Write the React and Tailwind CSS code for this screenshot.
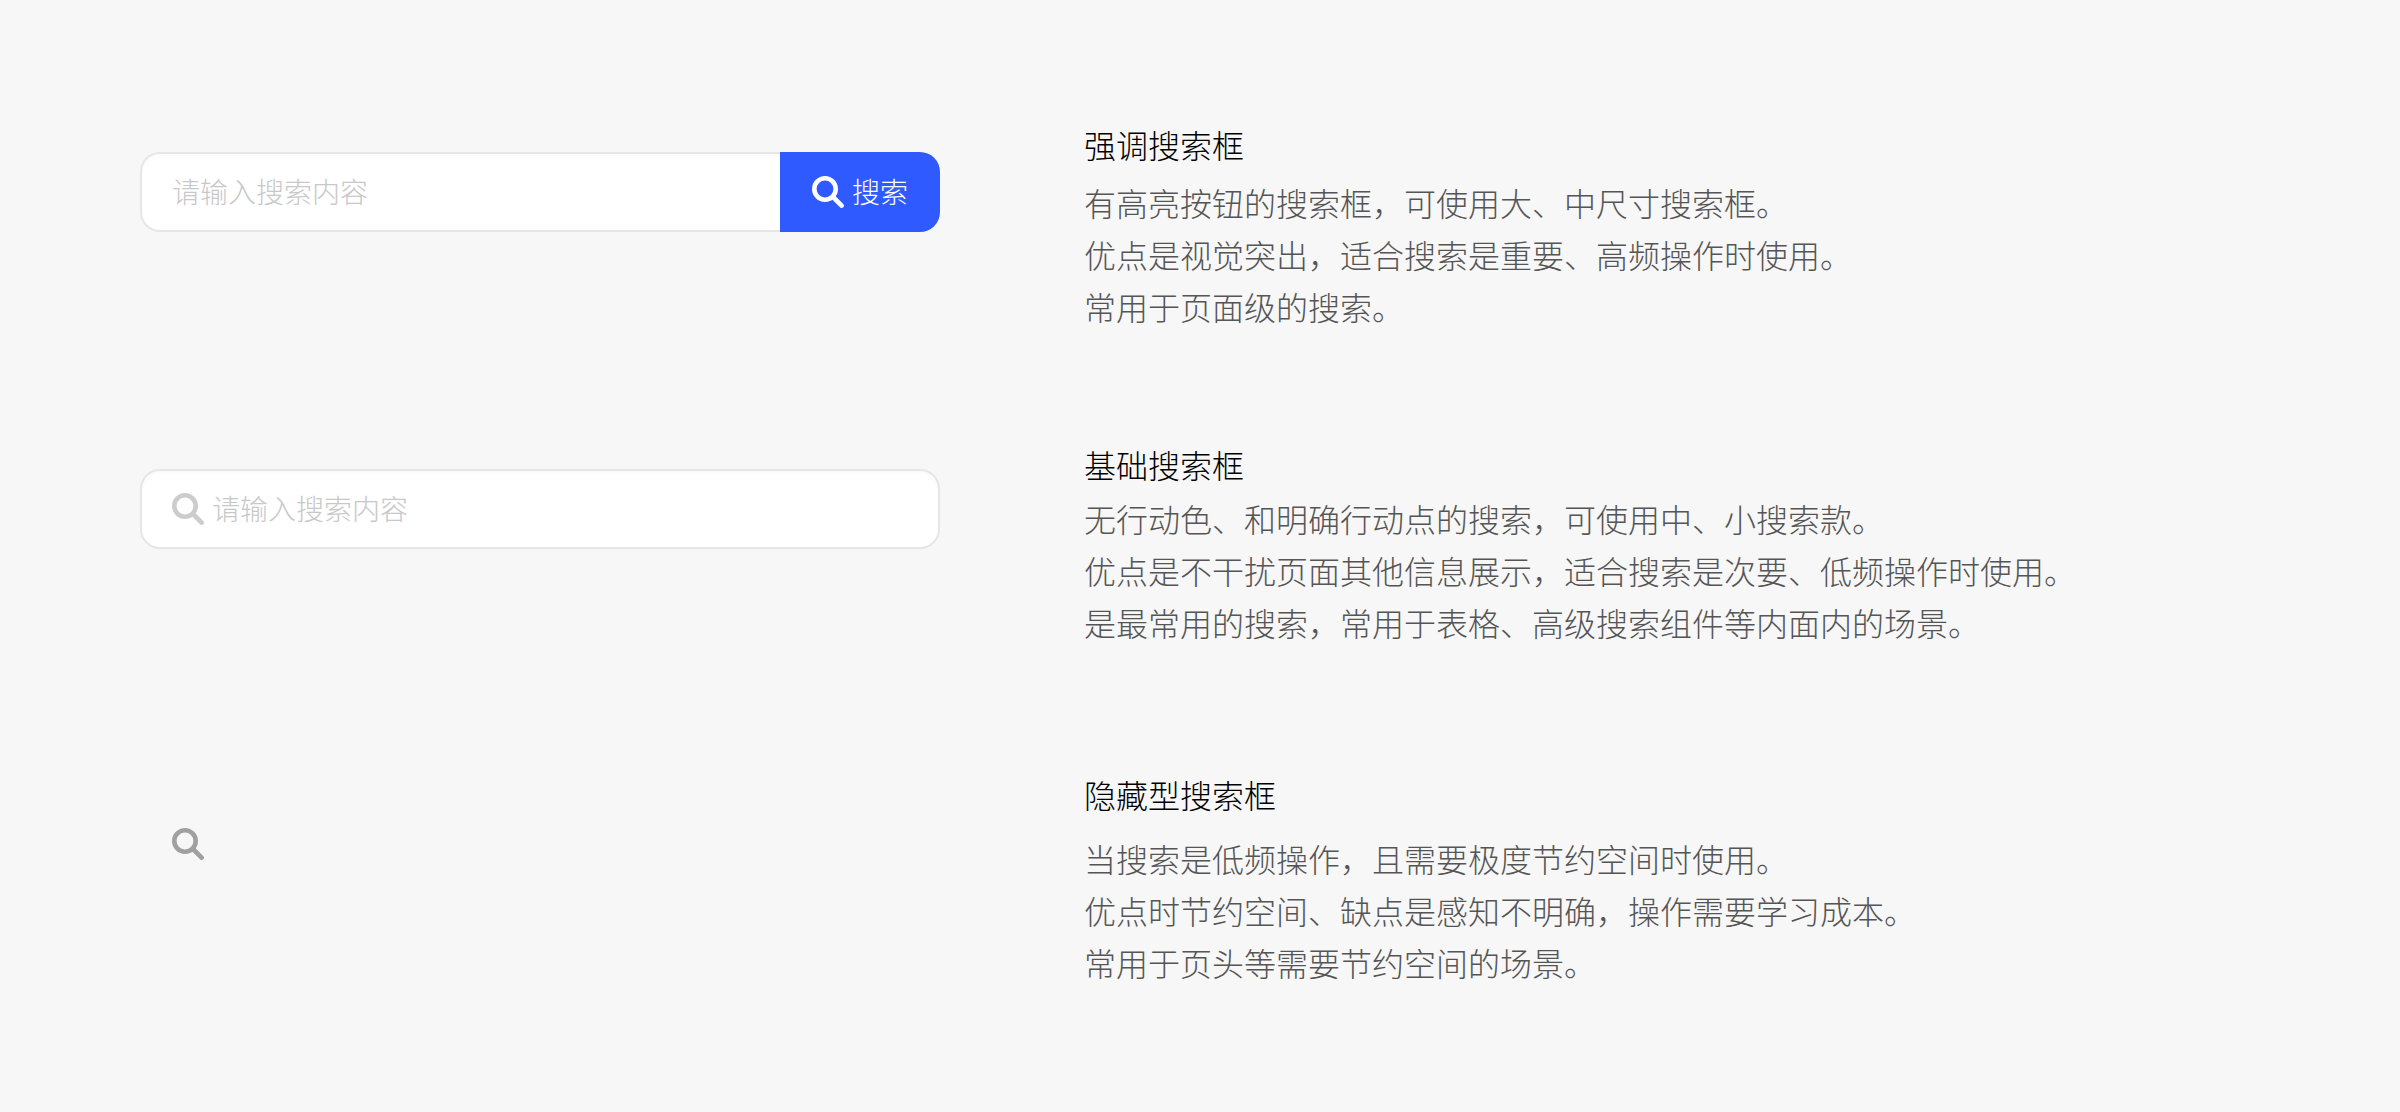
function Search({ className, sw = 4.6 }) {
  return (
    <svg viewBox="0 0 32 32" fill="none" stroke="currentColor" strokeLinecap="round" className={className}>
      <circle cx="13" cy="13" r="10.7" strokeWidth={sw} />
      <path d="M21 21l8.6 8.6" strokeWidth={sw} />
    </svg>
  );
}
function Desc({ title, titleClass, lines }) {
  return (
    <div>
      <div className={"text-[32px] leading-[52px] text-[#000000] font-light " + titleClass}>{title}</div>
      {lines.map((l) => (
        <div key={l} className="text-[32px] leading-[52px] text-[#555555] font-light whitespace-nowrap">{l}</div>
      ))}
    </div>
  );
}
export default function App() {
  return (
    <div className="w-[2400px] h-[1112px] bg-[#f7f7f7] overflow-hidden pl-[140px] pt-[118px] font-['Noto_Sans_CJK_SC',sans-serif]">
      <div className="flex items-start h-[320px]">
        <div className="w-[800px] h-[80px] mt-[34px] flex shrink-0">
          <div className="flex-1 bg-white border-2 border-r-0 border-[#e6e6e6] rounded-l-[20px] pl-[30px] pb-[2px] flex items-center text-[28px] font-light text-[#c8c8c8] shadow-[inset_0_3px_5px_rgba(0,0,0,0.02)]">请输入搜索内容</div>
          <div className="w-[160px] bg-[#2f5aff] rounded-r-[20px] flex items-center justify-center gap-[8px] text-white text-[28px] font-light">
            <Search className="w-[32px] h-[32px]" />
            <span className="pb-[2px]">搜索</span>
          </div>
        </div>
        <div className="ml-[144px]">
          <Desc title="强调搜索框" titleClass="mb-[6px]" lines={["有高亮按钮的搜索框，可使用大、中尺寸搜索框。", "优点是视觉突出，适合搜索是重要、高频操作时使用。", "常用于页面级的搜索。"]} />
        </div>
      </div>
      <div className="flex items-start h-[330px]">
        <div className="w-[800px] h-[80px] mt-[31px] shrink-0 bg-white border-2 border-[#e6e6e6] rounded-[20px] pl-[30px] flex items-center gap-[8px] text-[28px] font-light text-[#c8c8c8] shadow-[inset_0_3px_5px_rgba(0,0,0,0.02)]">
          <Search className="w-[32px] h-[32px] text-[#cccccc]" />
          <span className="pb-[2px]">请输入搜索内容</span>
        </div>
        <div className="ml-[144px]">
          <Desc title="基础搜索框" titleClass="mb-[2px]" lines={["无行动色、和明确行动点的搜索，可使用中、小搜索款。", "优点是不干扰页面其他信息展示，适合搜索是次要、低频操作时使用。", "是最常用的搜索，常用于表格、高级搜索组件等内面内的场景。"]} />
        </div>
      </div>
      <div className="flex items-start">
        <div className="w-[800px] shrink-0 pl-[32px] pt-[60px]">
          <Search className="w-[32px] h-[32px] text-[#a0a0a0]" />
        </div>
        <div className="ml-[144px]">
          <Desc title="隐藏型搜索框" titleClass="mb-[12px]" lines={["当搜索是低频操作，且需要极度节约空间时使用。", "优点时节约空间、缺点是感知不明确，操作需要学习成本。", "常用于页头等需要节约空间的场景。"]} />
        </div>
      </div>
    </div>
  );
}
